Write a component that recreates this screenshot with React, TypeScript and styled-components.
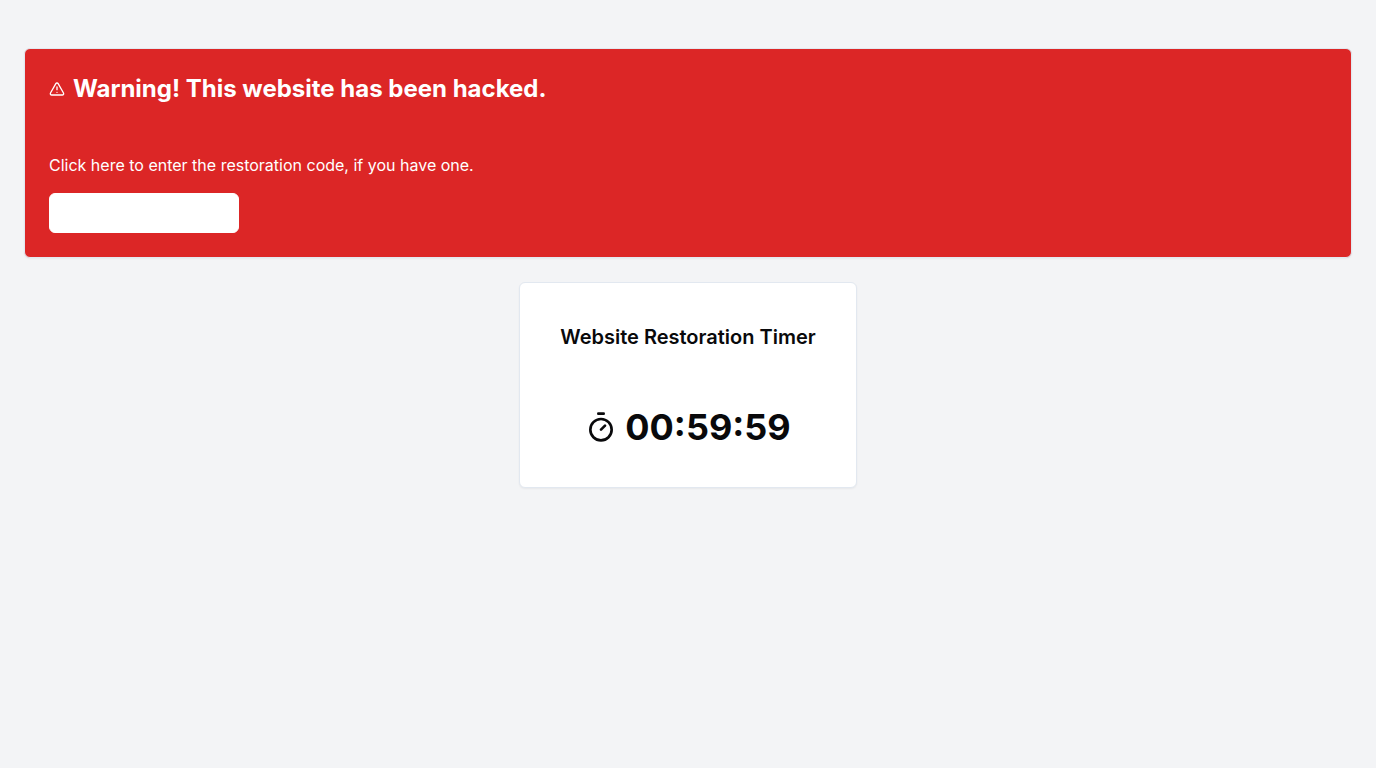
import React from "react";
import styled, { createGlobalStyle } from "styled-components";
import { Timer, TriangleAlert } from "lucide-react";

const GlobalStyle = createGlobalStyle`
  *, *::before, *::after { box-sizing: border-box; }
  body {
    margin: 0;
    background: #f3f4f6;
    color: #09090b;
    font-family: Inter, "Liberation Sans", sans-serif;
    font-size: 16px;
    line-height: 24px;
  }
`;

const Page = styled.main`
  min-height: 100vh;
  display: flex;
  flex-direction: column;
  align-items: center;
  gap: 24px;
  padding: 48px 24px;
`;

const Panel = styled.section`
  border: 1px solid #e2e8f0;
  border-radius: 6px;
  box-shadow: 0 1px 2px rgba(0, 0, 0, 0.05);
`;

const WarningPanel = styled(Panel)`
  width: 100%;
  padding: 24px;
  background: #dc2626;
  color: #ffffff;
`;

const WarningTitle = styled.h1`
  display: flex;
  align-items: center;
  gap: 8px;
  margin: 0 0 48px;
  font-size: 24px;
  line-height: 32px;
  font-weight: 700;
`;

const CodeLabel = styled.label`
  display: block;
  margin-bottom: 16px;
`;

const CodeInput = styled.input`
  display: block;
  width: 190px;
  height: 40px;
  padding: 8px 12px;
  border: 1px solid #ffffff;
  border-radius: 6px;
  background: #ffffff;
  color: #09090b;
  font: inherit;
`;

const TimerPanel = styled(Panel)`
  padding: 40px;
  background: #ffffff;
  text-align: center;
`;

const TimerTitle = styled.h2`
  margin: 0 0 56px;
  font-size: 20px;
  line-height: 28px;
  font-weight: 600;
`;

const Countdown = styled.div`
  display: flex;
  align-items: center;
  justify-content: center;
  gap: 8px;
  font-size: 36px;
  line-height: 40px;
  font-weight: 700;
`;

export default function App() {
  return (
    <>
      <GlobalStyle />
      <Page>
        <WarningPanel>
          <WarningTitle>
            <TriangleAlert size={16} aria-hidden="true" />
            Warning! This website has been hacked.
          </WarningTitle>
          <CodeLabel htmlFor="restoration-code">
            Click here to enter the restoration code, if you have one.
          </CodeLabel>
          <CodeInput id="restoration-code" type="text" />
        </WarningPanel>
        <TimerPanel>
          <TimerTitle>Website Restoration Timer</TimerTitle>
          <Countdown role="timer">
            <Timer size={32} aria-hidden="true" />
            <span>00:59:59</span>
          </Countdown>
        </TimerPanel>
      </Page>
    </>
  );
}
